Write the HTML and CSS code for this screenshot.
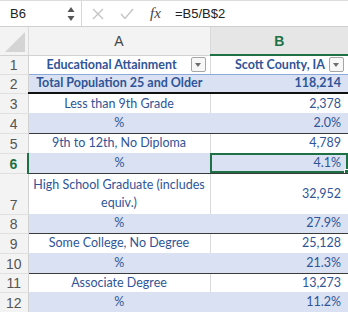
FILE: index.html
```html
<!DOCTYPE html>
<html lang="en">
<head>
  <meta charset="UTF-8" />
  <title>Scott County, IA</title>
  <link rel="stylesheet" href="styles.css">
</head>
<body>

  <div class="formula-bar">
    <div class="name-box">
      <span>B6</span>
      <svg class="spin" width="8" height="16" viewBox="0 0 8 16">
        <path d="M4 1 L7.5 6 L0.5 6 Z" fill="#555"/>
        <path d="M4 15 L7.5 10 L0.5 10 Z" fill="#555"/>
      </svg>
    </div>
    <div class="fx-icons">
      <svg width="12" height="12" viewBox="0 0 12 12">
        <path d="M1 1 L11 11 M11 1 L1 11" stroke="#c4c4c4" stroke-width="1.4" fill="none"/>
      </svg>
      <svg width="14" height="12" viewBox="0 0 14 12">
        <path d="M1 6 L5 10.5 L13 1" stroke="#c4c4c4" stroke-width="1.4" fill="none"/>
      </svg>
      <span class="fx">fx</span>
    </div>
    <div class="formula">=B5/B$2</div>
  </div>

  <table class="sheet">
    <colgroup>
      <col class="c-rh">
      <col class="c-a">
      <col class="c-b">
    </colgroup>
    <tr class="col-heads">
      <th class="corner"><span class="tri"></span></th>
      <th>A</th>
      <th class="sel">B</th>
    </tr>
    <tr class="r-head short">
      <th class="rn">1</th>
      <td class="a"><div class="hcell"><span>Educational Attainment</span><i class="filter"></i></div></td>
      <td class="b"><div class="hcell"><span>Scott County, IA</span><i class="filter"></i></div></td>
    </tr>
    <tr class="band total short">
      <th class="rn">2</th>
      <td class="a">Total Population 25 and Older</td>
      <td class="b">118,214</td>
    </tr>
    <tr>
      <th class="rn">3</th>
      <td class="a">Less than 9th Grade</td>
      <td class="b">2,378</td>
    </tr>
    <tr class="band">
      <th class="rn">4</th>
      <td class="a">%</td>
      <td class="b">2.0%</td>
    </tr>
    <tr>
      <th class="rn">5</th>
      <td class="a">9th to 12th, No Diploma</td>
      <td class="b">4,789</td>
    </tr>
    <tr class="band">
      <th class="rn sel">6</th>
      <td class="a">%</td>
      <td class="b active">4.1%<i class="handle"></i></td>
    </tr>
    <tr class="tall">
      <th class="rn">7</th>
      <td class="a">High School Graduate (includes equiv.)</td>
      <td class="b">32,952</td>
    </tr>
    <tr class="band short">
      <th class="rn">8</th>
      <td class="a">%</td>
      <td class="b">27.9%</td>
    </tr>
    <tr>
      <th class="rn">9</th>
      <td class="a">Some College, No Degree</td>
      <td class="b">25,128</td>
    </tr>
    <tr class="band">
      <th class="rn">10</th>
      <td class="a">%</td>
      <td class="b">21.3%</td>
    </tr>
    <tr class="short">
      <th class="rn">11</th>
      <td class="a">Associate Degree</td>
      <td class="b">13,273</td>
    </tr>
    <tr class="band">
      <th class="rn">12</th>
      <td class="a">%</td>
      <td class="b">11.2%</td>
    </tr>
  </table>

</body>
</html>
```

FILE: styles.css
```css
body {
  margin: 0;
  width: 348px;
  height: 312px;
  overflow: hidden;
  background: #fff;
  font-family: Lato, "Liberation Sans", sans-serif;
}

/* formula bar */
.formula-bar {
  display: flex;
  align-items: center;
  height: 25px;
  border-top: 1px solid #dcdcdc;
  border-bottom: 1px solid #cfcfcf;
  font-family: "Liberation Sans", sans-serif;
  font-size: 13px;
  color: #222;
}

.name-box {
  width: 82px;
  height: 25px;
  box-sizing: border-box;
  display: flex;
  align-items: center;
  justify-content: space-between;
  padding: 0 6px 0 10px;
  border-right: 1px solid #d6d6d6;
}

.fx-icons {
  display: flex;
  align-items: center;
  gap: 16px;
  padding-left: 10px;
  width: 76px;
}

.fx {
  font-family: "Liberation Serif", serif;
  font-style: italic;
  font-size: 15px;
  color: #444;
}

.formula {
  padding-left: 7px;
}

/* grid */
.sheet {
  border-collapse: collapse;
  table-layout: fixed;
  width: 348px;
}

.c-rh { width: 28px; }
.c-a { width: 182px; }
.c-b { width: 138px; }

.col-heads {
  height: 28px;
}

.col-heads th {
  padding: 0;
  background: #f3f3f3;
  border-right: 1px solid #dadada;
  border-bottom: 1px solid #d2d2d2;
  font-family: "Liberation Sans", sans-serif;
  font-weight: normal;
  font-size: 14px;
  color: #444;
}

.col-heads th.sel {
  background: #e6e6e6;
  color: #1e7145;
  font-weight: bold;
  border-bottom: 2px solid #1e7145;
  border-right: none;
}

.corner {
  position: relative;
}

.corner .tri {
  position: absolute;
  right: 3px;
  bottom: 3px;
  width: 0;
  height: 0;
  border-left: 20px solid transparent;
  border-bottom: 20px solid #d4d4d4;
}

.rn {
  padding: 0;
  background: #f3f3f3;
  border-right: 1px solid #d2d2d2;
  border-bottom: 1px solid #e0e0e0;
  font-family: "Liberation Sans", sans-serif;
  font-weight: normal;
  font-size: 14px;
  color: #555;
  vertical-align: bottom;
  padding-bottom: 1px;
}

.rn.sel {
  color: #1e7145;
  font-weight: bold;
  border-right: 2px solid #1e7145;
}

tr {
  height: 20px;
}

tr.short {
  height: 19px;
}

tr.tall {
  height: 41px;
}

td {
  padding: 0 7px 0 4px;
  font-size: 12.5px;
  line-height: 16px;
  color: #2f5597;
  white-space: nowrap;
  overflow: hidden;
}

td.a {
  text-align: center;
  padding: 0 2px;
}

td.b {
  text-align: right;
  border-left: 1px solid #dadada;
}

tr.tall td.a {
  white-space: normal;
  line-height: 18px;
}

tr.band td {
  background: #d9e1f2;
  border-left: none;
  border-bottom: 1px solid #3a3a3a;
}

tr.total td {
  font-weight: bold;
  border-bottom: 2px solid #111;
}

tr.r-head td {
  font-weight: bold;
  border-bottom: 1px solid #8ea9db;
  padding: 0 4px 0 4px;
}

.hcell {
  display: flex;
  align-items: center;
  justify-content: space-between;
}

.hcell span {
  flex: 1;
  text-align: center;
}

td.b .hcell span {
  text-align: right;
  padding-right: 4px;
}

.filter {
  width: 13px;
  height: 13px;
  border: 1px solid #a6a6a6;
  border-radius: 2px;
  background: #f7f7f7;
  position: relative;
}

.filter::after {
  content: "";
  position: absolute;
  left: 3px;
  top: 5px;
  border-left: 3.5px solid transparent;
  border-right: 3.5px solid transparent;
  border-top: 4px solid #6d6d6d;
}

td.active {
  position: relative;
  outline: 2px solid #1e7145;
  outline-offset: -2px;
}

.handle {
  position: absolute;
  right: -3px;
  bottom: -3px;
  width: 5px;
  height: 5px;
  background: #1e7145;
  border: 1px solid #fff;
}
```
